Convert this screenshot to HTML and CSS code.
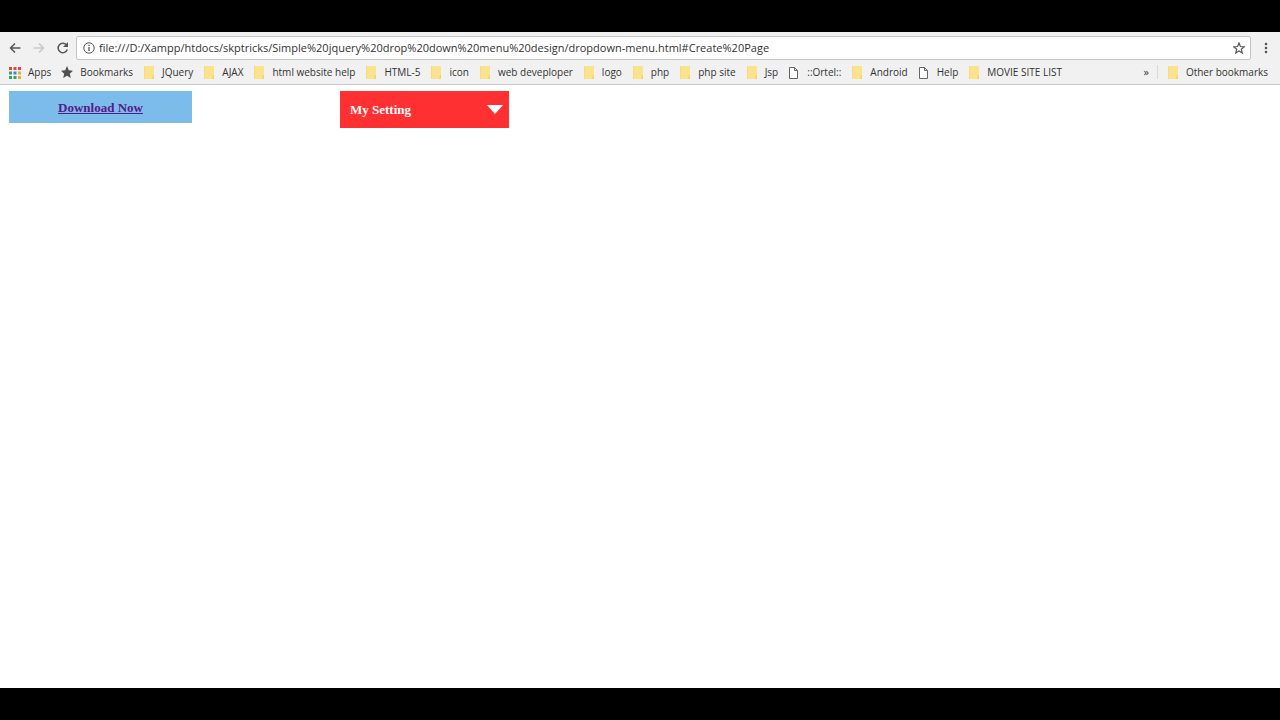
FILE: index.html
```html
<!DOCTYPE html>
<html lang="en">
<head>
<meta charset="utf-8">
<title>Dropdown menu</title>
<link rel="stylesheet" href="styles.css">
</head>
<body>
<svg class="defs" aria-hidden="true">
  <symbol id="folder" viewBox="0 0 12 13"><path d="M1 0h10v13H1z" fill="#fbe38e"/><path d="M1 0h1v13H1z" fill="#f6da7e"/><path d="M10 9h1v4H9z" fill="#f1d16c"/></symbol>
  <symbol id="page" viewBox="0 0 12 13"><path d="M1.500 1.500h5l3 3v8h-8zM6.500 1.500v3h3" fill="#fff" stroke="#666"/></symbol>
</svg>
<header class="browser">
  <div class="toolbar">
    <button class="tool" aria-label="Back"><svg width="12" height="12" viewBox="0 0 12 12"><path d="M11.500 6H1.500M6 1.500L1.500 6L6 10.500" class="line"/></svg></button>
    <button class="tool faded" aria-label="Forward"><svg width="12" height="12" viewBox="0 0 12 12"><path d="M.5 6h10M6 1.500L10.500 6L6 10.500" class="line"/></svg></button>
    <button class="tool" aria-label="Reload"><svg width="12" height="12" viewBox="0 0 12 12"><path d="M9.500 3A4.700 4.700 0 1 0 10.300 7.500" class="line"/><path d="M11 0v5H6z" fill="#555"/></svg></button>
    <div class="address">
      <svg width="12" height="12" viewBox="0 0 12 12"><circle cx="6" cy="6" r="5.200" fill="none" stroke="#555"/><path d="M6 5v4M6 2.800v1.300" stroke="#555" stroke-width="1.300"/></svg>
      <input class="url" aria-label="Address" value="file:///D:/Xampp/htdocs/skptricks/Simple%20jquery%20drop%20down%20menu%20design/dropdown-menu.html#Create%20Page">
      <button class="tool" aria-label="Bookmark this page"><svg width="12" height="12" viewBox="0 0 12 12"><path d="M6 1l1.400 3.500 3.800.3-2.900 2.400.9 3.700L6 8.900l-3.200 2 .9-3.700L.8 4.800l3.800-.3z" fill="none" stroke="#555" stroke-width="1.200"/></svg></button>
    </div>
    <button class="tool" aria-label="Menu"><svg width="12" height="12" viewBox="0 0 12 12"><g fill="#555"><circle cx="6" cy="2" r="1.300"/><circle cx="6" cy="6" r="1.300"/><circle cx="6" cy="10" r="1.300"/></g></svg></button>
  </div>
  <nav class="bookmarks">
    <a href="#"><svg class="icon" viewBox="0 0 12 13"><g fill="#e0483e"><path d="M0 1h3v3H0zM4.500 1h3v3h-3z"/><path d="M9 1h3v3H9z"/></g><path d="M0 5.500h3v3H0z" fill="#35a35a"/><path d="M4.500 5.500h3v3h-3z" fill="#3b82e0"/><path d="M9 5.500h3v3H9z" fill="#eea83a"/><path d="M0 10h3v3H0zM4.500 10h3v3h-3z" fill="#35a35a"/><path d="M9 10h3v3H9z" fill="#eea83a"/></svg>Apps</a>
    <a href="#"><svg class="icon" viewBox="0 0 12 13"><path d="M6 0l1.800 4.300 4.200.4-3.200 3 1 4.300L6 9.700 2.200 12l1-4.300L0 4.700l4.200-.4z" fill="#505050"/></svg>Bookmarks</a>
    <a href="#"><svg class="icon"><use href="#folder"/></svg>JQuery</a>
    <a href="#"><svg class="icon"><use href="#folder"/></svg>AJAX</a>
    <a href="#"><svg class="icon"><use href="#folder"/></svg>html website help</a>
    <a href="#"><svg class="icon"><use href="#folder"/></svg>HTML-5</a>
    <a href="#"><svg class="icon"><use href="#folder"/></svg>icon</a>
    <a href="#"><svg class="icon"><use href="#folder"/></svg>web deveploper</a>
    <a href="#"><svg class="icon"><use href="#folder"/></svg>logo</a>
    <a href="#"><svg class="icon"><use href="#folder"/></svg>php</a>
    <a href="#"><svg class="icon"><use href="#folder"/></svg>php site</a>
    <a href="#"><svg class="icon"><use href="#folder"/></svg>Jsp</a>
    <a href="#"><svg class="icon"><use href="#page"/></svg>::Ortel::</a>
    <a href="#"><svg class="icon"><use href="#folder"/></svg>Android</a>
    <a href="#"><svg class="icon"><use href="#page"/></svg>Help</a>
    <a href="#"><svg class="icon"><use href="#folder"/></svg>MOVIE SITE LIST</a>
    <button class="more" aria-label="More bookmarks">»</button>
    <a class="other" href="#"><svg class="icon"><use href="#folder"/></svg>Other bookmarks</a>
  </nav>
</header>
<main class="content">
  <div class="download"><a href="#">Download Now</a></div>
  <button class="setting">My Setting<svg width="16" height="9" viewBox="0 0 16 9"><path d="M0 0h16L8 9z" fill="#fff"/></svg></button>
</main>
</body>
</html>
```
FILE: styles.css
```css
* { box-sizing: border-box; }
body {
  display: flex;
  flex-direction: column;
  min-height: 100vh;
  margin: 0;
  border: solid #000;
  border-width: 32px 0;
  background: #fff;
}
button { padding: 0; border: 0; background: none; }
svg { display: block; flex: none; }
.defs { position: absolute; width: 0; height: 0; }
.line { fill: none; stroke: #555; stroke-width: 1.5; }
.browser {
  border-bottom: 1px solid #c9c9c9;
  background: #f1f1f1;
  color: #333;
  font-family: "Open Sans", "Noto Sans", sans-serif;
}
.toolbar { display: flex; align-items: center; gap: 12px; padding: 4px 8px 0 9px; }
.faded { opacity: 0.25; }
.address {
  display: flex;
  flex: 1;
  align-items: center;
  gap: 4px;
  height: 24px;
  margin: 0 -3px 0 -5px;
  padding: 0 5px 0 6px;
  border: 1px solid #c4c4c4;
  border-radius: 2px;
  background: #fff;
}
.url {
  flex: 1;
  min-width: 0;
  padding: 0;
  border: 0;
  outline: 0;
  background: none;
  color: #333;
  font: 11px/20px "Open Sans", "Noto Sans", sans-serif;
}
.bookmarks {
  display: flex;
  align-items: center;
  gap: 10px;
  height: 24px;
  padding: 0 12px 0 9px;
  font-size: 10px;
  white-space: nowrap;
}
.bookmarks a { display: flex; align-items: center; gap: 7px; color: inherit; text-decoration: none; }
.icon { width: 12px; height: 13px; }
.more { margin-left: auto; color: inherit; font: 11px/16px "Open Sans", "Noto Sans", sans-serif; }
.bookmarks .other { margin-left: -2px; padding-left: 9px; border-left: 1px solid #d8d8d8; }
.content {
  display: flex;
  flex: 1;
  align-items: flex-start;
  gap: 148px;
  padding: 6px 9px;
  font: bold 13px/16px "Liberation Serif", serif;
}
.download { width: 183px; padding: 9px 8px 7px; background: #7cbcea; text-align: center; }
.download a { color: #551a8b; }
.setting {
  display: flex;
  align-items: center;
  justify-content: space-between;
  width: 169px;
  height: 37px;
  padding: 0 6px 0 10px;
  background: #ff3031;
  color: #fff;
  font: inherit;
}
```
